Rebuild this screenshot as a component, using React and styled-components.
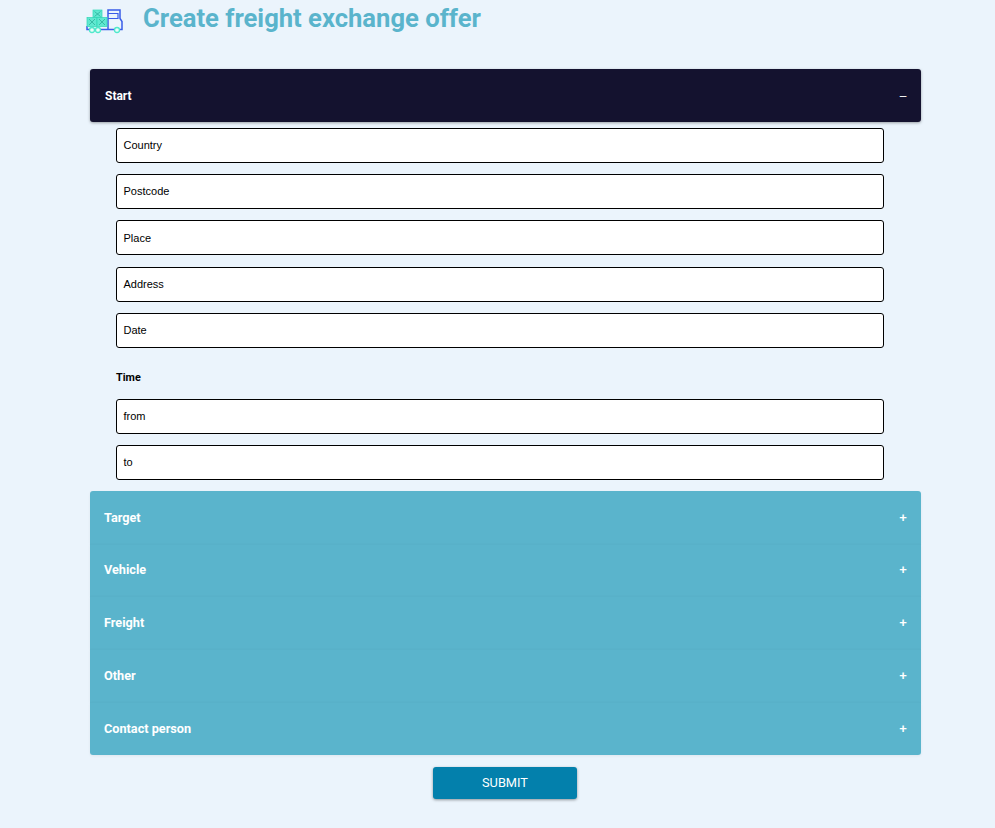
import styled, { createGlobalStyle } from "styled-components";

const GlobalStyle = createGlobalStyle`
  html, body {
    margin: 0;
    padding: 0;
    background: #ebf4fc;
    font-family: Roboto, "Liberation Sans", sans-serif;
  }
  * { box-sizing: border-box; }
`;

const Page = styled.div`
  width: 995px;
  height: 828px;
  overflow: hidden;
  display: flex;
  flex-direction: column;
`;

const Header = styled.div`
  display: flex;
  align-items: flex-start;
  height: 69px;
  padding-left: 85px;
`;

const Logo = styled.svg`
  width: 38px;
  height: 26px;
  margin-top: 8px;
  flex-shrink: 0;
`;

const Title = styled.h1`
  margin: 0 0 0 20px;
  font-size: 25.6px;
  line-height: 36px;
  font-weight: 700;
  color: #5ab4cc;
`;

const Accordion = styled.div`
  width: 831px;
  margin-left: 90px;
  display: flex;
  flex-direction: column;
`;

const PanelHeader = styled.div`
  height: ${(p) => p.$height || 52.8}px;
  display: flex;
  align-items: center;
  justify-content: space-between;
  padding: 0 14px 0 ${(p) => (p.$open ? 15 : 14)}px;
  color: #fff;
  background: ${(p) => (p.$open ? "#14122f" : "#5ab4cc")};
  border-radius: ${(p) => p.$radius || "0"};
  box-shadow: ${(p) => (p.$divider ? "inset 0 1px 0 #58b1c9," : "")} 0 1px 3px rgba(0, 0, 0, ${(p) => (p.$open ? 0.35 : 0.06)});
  font-size: ${(p) => (p.$open ? 12 : 12.7)}px;
  font-weight: 700;
`;

const Sign = styled.span`
  font-family: "Liberation Sans", sans-serif;
  font-size: ${(p) => (p.$minus ? 12 : 13)}px;
  font-weight: ${(p) => (p.$minus ? 400 : 700)};
  width: 8px;
  text-align: center;
`;

const Fields = styled.div`
  display: flex;
  flex-direction: column;
  gap: 11.2px;
  padding: 6px 0 11px 26px;
`;

const Field = styled.div`
  width: 768px;
  height: 35px;
  display: flex;
  align-items: center;
  padding-left: 6.5px;
  padding-bottom: 0.4px;
  background: #fff;
  border: 1px solid #000;
  border-radius: 3px;
  color: #000;
  font-family: "Liberation Sans", sans-serif;
  font-size: 11px;
`;

const GroupLabel = styled.div`
  height: 28.4px;
  padding-top: 8px;
  display: flex;
  align-items: center;
  font-size: 10.8px;
  font-weight: 700;
  color: #000;
`;

const Footer = styled.div`
  display: flex;
  justify-content: center;
  padding: 12px 0 0 15px;
`;

const SubmitButton = styled.button`
  width: 144px;
  height: 32px;
  border: none;
  border-radius: 3px;
  background: #0380ac;
  color: #fff;
  font-family: Roboto, sans-serif;
  font-size: 12.8px;
  box-shadow: 0 1px 3px rgba(0, 0, 0, 0.4);
`;

const TruckLogo = () => (
  <Logo viewBox="0 0 38 26" fill="none">
    <path d="M2 18V21.5H37V13.5L35 10.5V2H23V21" stroke="#3a5ce8" strokeWidth="1.5" />
    <path d="M23 5.5H33V10.5H23" stroke="#3a5ce8" strokeWidth="1.2" />
    <g fill="#5fe8d0" stroke="#2fd6b6" strokeWidth="0.7">
      <rect x="8" y="2" width="9" height="8" />
      <rect x="2" y="9.5" width="10" height="9" />
      <rect x="12" y="9.5" width="10" height="9" />
    </g>
    <g stroke="#1f9c8c" strokeWidth="0.6">
      <path d="M9.5 3.5L15.5 8.5M15.5 3.5L9.5 8.5" />
      <path d="M4 11L10 17M10 11L4 17" />
      <path d="M14 11L20 17M20 11L14 17" />
    </g>
    <g fill="#eafdf8" stroke="#4fe8cb" strokeWidth="1.3">
      <circle cx="7" cy="22" r="2.5" />
      <circle cx="13" cy="22" r="2.5" />
      <circle cx="32" cy="22" r="2.5" />
    </g>
  </Logo>
);

const startFields = ["Country", "Postcode", "Place", "Address", "Date"];
const timeFields = ["from", "to"];
const closedPanels = ["Target", "Vehicle", "Freight", "Other", "Contact person"];

const App = () => {
  return (
    <Page>
      <GlobalStyle />
      <Header>
        <TruckLogo />
        <Title>Create freight exchange offer</Title>
      </Header>
      <Accordion>
        <PanelHeader $open $height={53} $radius="3px">
          Start
          <Sign $minus>–</Sign>
        </PanelHeader>
        <Fields>
          {startFields.map((name) => (
            <Field key={name}>{name}</Field>
          ))}
          <GroupLabel>Time</GroupLabel>
          {timeFields.map((name) => (
            <Field key={name}>{name}</Field>
          ))}
        </Fields>
        {closedPanels.map((name, i) => (
          <PanelHeader
            key={name}
            $divider={i > 0}
            $radius={i === 0 ? "3px 3px 0 0" : i === closedPanels.length - 1 ? "0 0 3px 3px" : "0"}
          >
            {name}
            <Sign>+</Sign>
          </PanelHeader>
        ))}
      </Accordion>
      <Footer>
        <SubmitButton>SUBMIT</SubmitButton>
      </Footer>
    </Page>
  );
};

export default App;
